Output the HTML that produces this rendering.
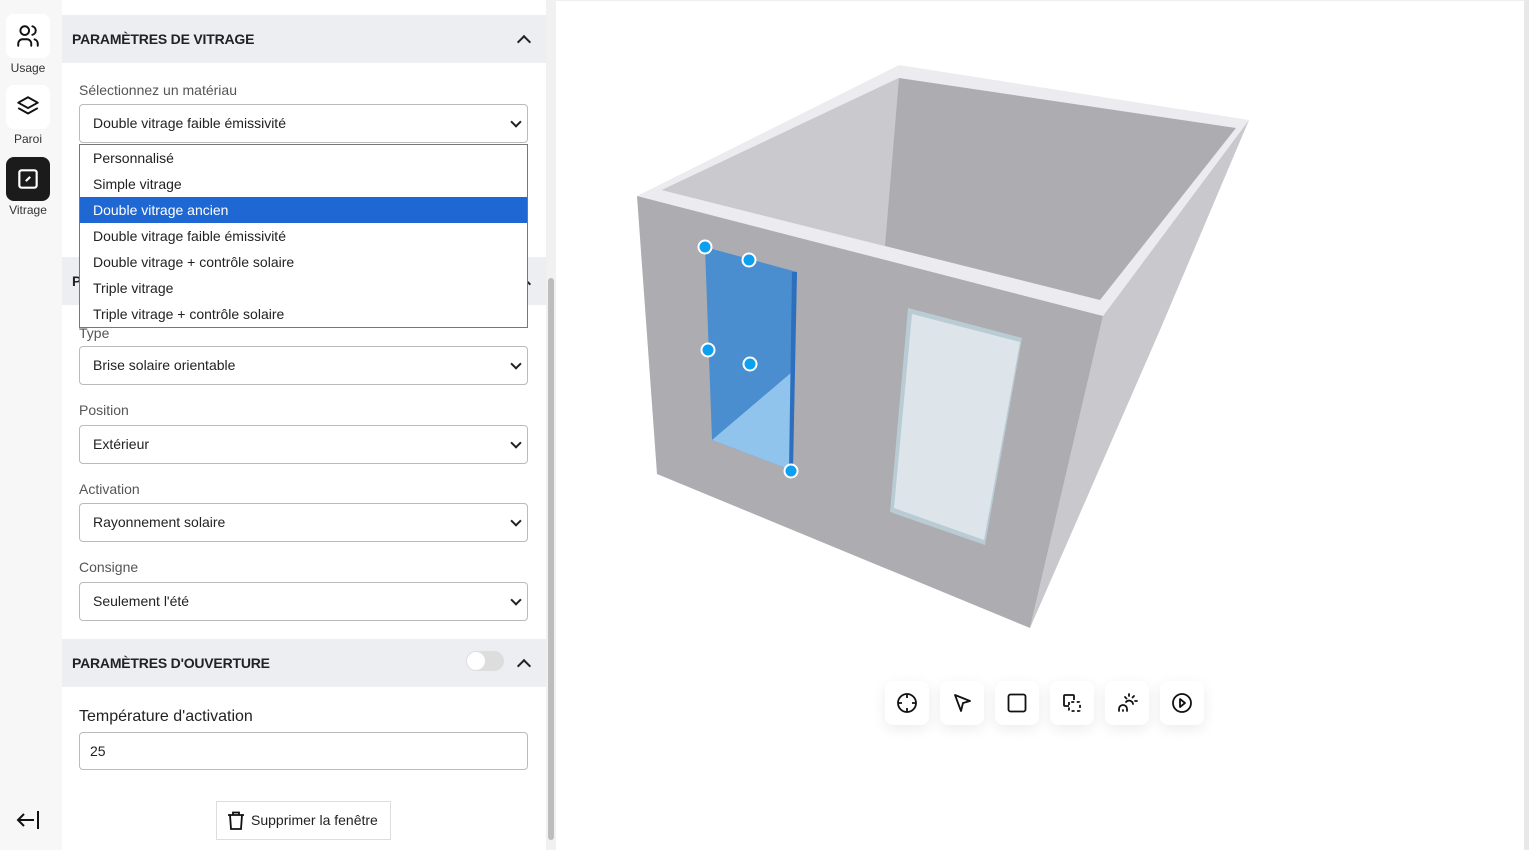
<!DOCTYPE html>
<html><head><meta charset="utf-8"><style>
*{box-sizing:border-box;margin:0;padding:0}
body{width:1529px;height:850px;overflow:hidden;background:#fff;font-family:"Liberation Sans",sans-serif;color:#222;position:relative}
.side{position:absolute;left:0;top:0;width:62px;height:850px;background:#f7f7f8}
.tile{position:absolute;left:6px;width:44px;height:44px;border-radius:8px;background:#fff;display:flex;align-items:center;justify-content:center}
.tl{position:absolute;width:56px;text-align:center;font-size:12px;color:#333}
.panel{position:absolute;left:62px;top:0;width:484px;height:850px;background:#fff}
.hdr{position:absolute;left:0;width:484px;height:48px;background:#eceef1;font-weight:bold;font-size:14px;color:#222;padding-left:10px;line-height:48px;letter-spacing:-.2px}
.lbl{position:absolute;left:17px;font-size:14px;color:#555}
.sel{position:absolute;left:17px;width:449px;height:39px;border:1px solid #bbb;border-radius:4px;font-size:14px;line-height:37px;padding-left:13px;color:#222;background:#fff}
.sel:after{content:"";position:absolute;right:7px;top:13px;width:6px;height:6px;border-right:2px solid #222;border-bottom:2px solid #222;transform:rotate(45deg)}
.inp{position:absolute;left:17px;width:449px;height:38px;border:1px solid #bbb;border-radius:4px;font-size:14px;line-height:36px;padding-left:10px;background:#fff}
.chev{position:absolute;right:17px;top:22px;width:10px;height:10px;border-left:2.5px solid #222;border-top:2.5px solid #222;transform:rotate(45deg)}
.dd{position:absolute;left:79px;top:144px;width:449px;height:184px;border:1px solid #777;background:#fff;font-size:14px}
.dd div{height:26px;line-height:26px;padding-left:13px;color:#222}
.dd .on{background:#1f67d2;color:#fff}
.sb{position:absolute;left:546px;top:0;width:10px;height:850px;background:#f1f1f1}
.btn{position:absolute;top:681px;width:44px;height:44px;background:#fff;border-radius:8px;box-shadow:0 4px 14px rgba(0,0,0,.08);display:flex;align-items:center;justify-content:center}
</style></head><body>
<div class="side">
 <div class="tile" style="top:14px"><svg width="26" height="26" viewBox="0 0 24 24" fill="none" stroke="#111" stroke-width="1.8" stroke-linecap="round"><circle cx="9" cy="7" r="4"/><path d="M3 21v-2a4 4 0 0 1 4-4h4a4 4 0 0 1 4 4v2"/><path d="M16 3.1a4 4 0 0 1 0 7.8"/><path d="M21 21v-2a4 4 0 0 0-3-3.9"/></svg></div>
 <div class="tl" style="top:61px">Usage</div>
 <div class="tile" style="top:85px"><svg width="26" height="26" viewBox="0 0 24 24" fill="none" stroke="#111" stroke-width="1.8" stroke-linejoin="round"><path d="M12 3 3 8l9 5 9-5z"/><path d="M3 13l9 5 9-5"/></svg></div>
 <div class="tl" style="top:132px">Paroi</div>
 <div class="tile" style="top:157px;background:#1b1b1b"><svg width="26" height="26" viewBox="0 0 24 24" fill="none" stroke="#fff" stroke-width="2"><rect x="4" y="4" width="16" height="16" rx="2"/><path d="M10 14l4-4"/></svg></div>
 <div class="tl" style="top:203px">Vitrage</div>
 <svg style="position:absolute;left:15px;top:808px" width="26" height="24" viewBox="0 0 26 24" fill="none" stroke="#111" stroke-width="2"><path d="M23 3v18M19 12H3M9 6l-6 6 6 6"/></svg>
</div>
<div class="panel">
 <div class="hdr" style="top:15px">PARAMÈTRES DE VITRAGE<span class="chev"></span></div>
 <div class="lbl" style="top:82px">Sélectionnez un matériau</div>
 <div class="sel" style="top:104px">Double vitrage faible émissivité</div>
 <div class="hdr" style="top:257px">P<span class="chev"></span></div>
 <div class="lbl" style="top:325px">Type</div>
 <div class="sel" style="top:346px">Brise solaire orientable</div>
 <div class="lbl" style="top:402px">Position</div>
 <div class="sel" style="top:425px">Extérieur</div>
 <div class="lbl" style="top:481px">Activation</div>
 <div class="sel" style="top:503px">Rayonnement solaire</div>
 <div class="lbl" style="top:559px">Consigne</div>
 <div class="sel" style="top:582px">Seulement l'été</div>
 <div class="hdr" style="top:639px">PARAMÈTRES D'OUVERTURE<span style="position:absolute;left:404px;top:12px;width:38px;height:20px;border-radius:10px;background:#ddd"><span style="position:absolute;left:1px;top:1px;width:18px;height:18px;border-radius:9px;background:#fff"></span></span><span class="chev"></span></div>
 <div class="lbl" style="top:708px;font-size:16px;color:#222">Température d'activation</div>
 <div class="inp" style="top:732px">25</div>
 <div style="position:absolute;left:154px;top:801px;width:175px;height:39px;border:1px solid #ddd;font-size:14px;line-height:37px;padding-left:34px">Supprimer la fenêtre
  <svg style="position:absolute;left:10px;top:9px" width="18" height="20" viewBox="0 0 18 20" fill="none" stroke="#111" stroke-width="1.8"><path d="M1 4h16M6 4V1.5h6V4M3 4l1 14h10l1-14"/></svg></div>
</div>
<div class="sb"><div style="position:absolute;left:2px;top:278px;width:6px;height:562px;background:#bdbdbd;border-radius:3px"></div></div>
<div class="dd"><div>Personnalisé</div><div>Simple vitrage</div><div class="on">Double vitrage ancien</div><div>Double vitrage faible émissivité</div><div>Double vitrage + contrôle solaire</div><div>Triple vitrage</div><div>Triple vitrage + contrôle solaire</div></div>
<div style="position:absolute;left:556px;top:0;width:968px;height:1px;background:#eee"></div>
<div style="position:absolute;left:1524px;top:0;width:5px;height:850px;background:#e8e8e8"></div>
<svg style="position:absolute;left:0;top:0" width="1529" height="850">
 <polygon points="637,196 899,65 1249,120 1103,316" fill="#ececf0"/>
 <polygon points="662,190 899,78 1236,128 1100,300" fill="#adacb1"/>
 <polygon points="662,190 899,78 885,246" fill="#c9c9ce"/>
 <polygon points="1249,120 1103,316 1030,628 1160,330" fill="#c8c8cd"/>
 <polygon points="637,196 1103,316 1030,628 657,474" fill="#adacb1"/>
 <polygon points="908,308 1022,338 985,545 890,512" fill="#b9ccd4"/>
 <polygon points="912,314 1020,342 984,540 894,508" fill="#dde5ea"/>
 <polygon points="705,247 797,272 791,470 712,440" fill="#4a8ed0"/>
 <polygon points="712,440 791,470 792,372" fill="#91c4ec"/>
 <polygon points="792,272 797,272 793,470 789,470" fill="#2c6fbf"/>
 <g fill="#0ea0f0" stroke="#fff" stroke-width="2"><circle cx="705" cy="247" r="6.5"/><circle cx="749" cy="260" r="6.5"/><circle cx="708" cy="350" r="6.5"/><circle cx="750" cy="364" r="6.5"/><circle cx="791" cy="471" r="6.5"/></g>
</svg>
<div class="btn" style="left:885px"><svg width="24" height="24" viewBox="0 0 24 24" fill="none" stroke="#111" stroke-width="1.8"><circle cx="12" cy="12" r="9"/><path d="M12 3v4M12 17v4M3 12h4M17 12h4"/></svg></div>
<div class="btn" style="left:940px"><svg width="24" height="24" viewBox="0 0 24 24" fill="none" stroke="#111" stroke-width="1.8" stroke-linejoin="round"><path d="M5 4l15 6-7 2-2 8z"/></svg></div>
<div class="btn" style="left:995px"><svg width="24" height="24" viewBox="0 0 24 24" fill="none" stroke="#111" stroke-width="1.8"><rect x="3.5" y="3.5" width="17" height="17" rx="2"/></svg></div>
<div class="btn" style="left:1050px"><svg width="24" height="24" viewBox="0 0 24 24" fill="none" stroke="#111" stroke-width="1.8"><path d="M9 15H5a1 1 0 0 1-1-1V5a1 1 0 0 1 1-1h8a1 1 0 0 1 1 1v4"/><path d="M9 11v8a1 1 0 0 0 1 1h9a1 1 0 0 0 1-1v-7a1 1 0 0 0-1-1h-9" stroke-dasharray="3 2.5"/></svg></div>
<div class="btn" style="left:1105px"><svg width="24" height="24" viewBox="0 0 24 24" fill="none" stroke="#111" stroke-width="1.8" stroke-linecap="round"><path d="M14 3v2M20 10h2M19 5l-1.5 1.5M10 6l1.5 1.5"/><path d="M11 11a4 4 0 0 1 7 2"/><path d="M4 20v-2a4 4 0 0 1 8 0v2M8 20v-1" /></svg></div>
<div class="btn" style="left:1160px"><svg width="24" height="24" viewBox="0 0 24 24" fill="none" stroke="#111" stroke-width="1.8" stroke-linejoin="round"><circle cx="12" cy="12" r="9"/><path d="M10 8l5 4-5 4z"/></svg></div>
</body></html>
